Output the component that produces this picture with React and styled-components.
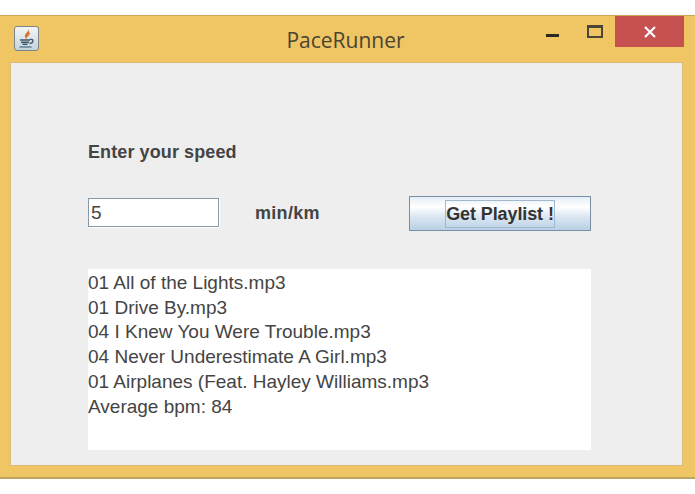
import React from "react";
import styled, { createGlobalStyle } from "styled-components";

const tracks = [
  "01 All of the Lights.mp3",
  "01 Drive By.mp3",
  "04 I Knew You Were Trouble.mp3",
  "04 Never Underestimate A Girl.mp3",
  "01 Airplanes (Feat. Hayley Williams.mp3",
  "Average bpm: 84",
];

const GlobalStyle = createGlobalStyle`
  html, body {
    margin: 0;
    background: #ffffff;
    font-family: "Liberation Sans", Arial, sans-serif;
    color: #333333;
  }
`;

const Page = styled.div`
  width: 695px;
  height: 494px;
  padding-top: 15px;
  box-sizing: border-box;
  overflow: hidden;
`;

const Window = styled.div`
  width: 695px;
  height: 464px;
  box-sizing: border-box;
  background: #f0c563;
  border-top: 1px solid #c9a659;
  border-bottom: 2px solid #bda461;
  display: flex;
  flex-direction: column;
`;

const TitleBar = styled.div`
  height: 46px;
  display: grid;
  grid-template-columns: 1fr auto 1fr;
  align-items: start;
  flex-shrink: 0;
`;

const AppIcon = styled.div`
  width: 25px;
  height: 25px;
  margin: 10px 0 0 14px;
  border-radius: 3px;
  border: 1px solid #7d8587;
  box-sizing: border-box;
  background: linear-gradient(#f4f6f6, #c3d3dd);
  display: flex;
  align-items: center;
  justify-content: center;
`;

const Title = styled.div`
  font-family: "Open Sans", "Liberation Sans", sans-serif;
  font-size: 21px;
  line-height: 26px;
  margin: 11px 0 0 -4px;
  color: #4a4433;
`;

const Controls = styled.div`
  display: flex;
  justify-content: flex-end;
  align-items: flex-start;
  padding-right: 11px;
`;

const MinimizeButton = styled.div`
  width: 13px;
  height: 3px;
  margin: 18px 28px 0 0;
  background: #2c2a20;
`;

const MaximizeButton = styled.div`
  width: 16px;
  height: 13px;
  margin: 9px 12px 0 0;
  box-sizing: border-box;
  border: 2px solid #4a4536;
  border-top-width: 3px;
`;

const CloseButton = styled.div`
  width: 69px;
  height: 31px;
  background: #c75050;
  display: flex;
  align-items: center;
  justify-content: center;
`;

const Content = styled.div`
  flex: 1;
  margin: 0 12px 11px 10px;
  box-sizing: border-box;
  border: 1px solid #d9bd7c;
  background: #eeeeee;
  padding: 77px 0 0 77px;
`;

const SpeedLabel = styled.div`
  font-size: 18px;
  font-weight: 700;
  line-height: 24px;
  letter-spacing: 0.1px;
  color: #444444;
`;

const InputRow = styled.div`
  display: flex;
  align-items: flex-start;
  height: 36px;
  margin-top: 32px;
  width: 503px;
`;

const SpeedInput = styled.input`
  width: 131px;
  height: 29px;
  margin-top: 2px;
  box-sizing: border-box;
  border: 1px solid #8a99a6;
  box-shadow: 1px 1px 0 #ffffff;
  background: #ffffff;
  outline: none;
  padding: 0 2px;
  font: 19px "Liberation Sans", Arial, sans-serif;
  color: #444444;
`;

const UnitLabel = styled.span`
  margin: 5px 0 0 36px;
  font-size: 18px;
  line-height: 24px;
  font-weight: 700;
  letter-spacing: 0.3px;
  color: #444444;
`;

const PlaylistButton = styled.button`
  margin-left: auto;
  width: 182px;
  height: 35px;
  padding: 0;
  box-sizing: border-box;
  border: 1px solid #7a8ea3;
  background: linear-gradient(#e6eff7, #ffffff 30%, #dbe7f2 60%, #b9d0e6);
  display: flex;
  align-items: center;
  justify-content: center;
`;

const ButtonText = styled.span`
  border: 1px solid #a3b8cc;
  padding: 0;
  font: 700 18px/26px "Liberation Sans", Arial, sans-serif;
  letter-spacing: -0.1px;
  color: #333333;
`;

const Output = styled.div`
  width: 503px;
  height: 181px;
  margin-top: 37px;
  background: #ffffff;
  font-size: 19px;
  line-height: 24.7px;
  padding-top: 2px;
  box-sizing: border-box;
  color: #444444;
`;

const JavaIcon = () => (
  <svg width="20" height="20" viewBox="0 0 20 20">
    <path d="M11 0c1 3-4 4.500-3 8 .3 1 1 1.700 1.700 2.200C8.500 8 13.500 6.500 13 3.500 12.500 5 12 2 11 0z" fill="#e0732a" />
    <path d="M3 11h10M4 13.300h8M5.500 15.300h5" stroke="#3f5868" strokeWidth="1.400" fill="none" />
    <path d="M13 10.500c4-1 4 3.500-.5 4" stroke="#3f5868" strokeWidth="1.300" fill="none" />
    <path d="M2.500 18h12" stroke="#5d7b90" strokeWidth="1.400" />
  </svg>
);

const App = () => (
  <Page>
    <GlobalStyle />
    <Window>
      <TitleBar>
        <div>
          <AppIcon>
            <JavaIcon />
          </AppIcon>
        </div>
        <Title>PaceRunner</Title>
        <Controls>
          <MinimizeButton />
          <MaximizeButton />
          <CloseButton>
            <svg width="14" height="12" viewBox="0 0 14 12">
              <path d="M2 1l10 10M12 1L2 11" stroke="#ffffff" strokeWidth="2.200" />
            </svg>
          </CloseButton>
        </Controls>
      </TitleBar>
      <Content>
        <SpeedLabel>Enter your speed</SpeedLabel>
        <InputRow>
          <SpeedInput defaultValue="5" />
          <UnitLabel>min/km</UnitLabel>
          <PlaylistButton>
            <ButtonText>Get Playlist !</ButtonText>
          </PlaylistButton>
        </InputRow>
        <Output>
          {tracks.map((line) => (
            <div key={line}>{line}</div>
          ))}
        </Output>
      </Content>
    </Window>
  </Page>
);

export default App;
